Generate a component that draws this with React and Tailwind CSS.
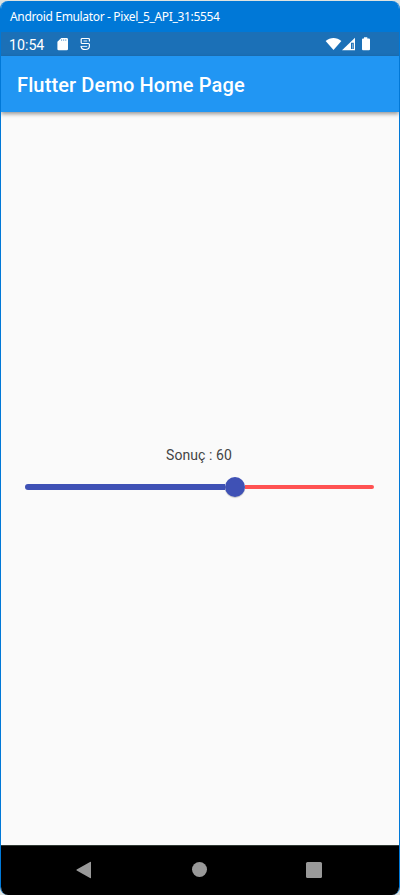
function TitleBar() {
  return (
    <div className="flex h-[31px] shrink-0 items-center whitespace-nowrap bg-[#0078d7] pl-[9px] text-[12px] leading-5 tracking-[-0.34px] text-white">
      <span className="font-['Noto_Sans',sans-serif]">Android Emulator - Pixel_5_API_31:5554</span>
    </div>
  );
}

function StatusBar() {
  return (
    <div className="flex h-6 shrink-0 items-center bg-[#1b70b7] pl-2 text-white">
      <span className="w-[48px] pt-px text-[14.2px] leading-6">10:54</span>
      <svg className="h-6 w-[11px]" viewBox="0 0 11 24" fill="none">
        <path d="M4.3 6H9.6Q11 6 11 7.3V17Q11 18.2 9.7 18.2H1.7Q.4 18.2 .4 17V9.7Z" fill="#fff" />
        <path d="M4.6 7.3v1.6M6.7 7.3v1.6M8.8 7.3v1.6" stroke="#1b70b7" strokeWidth=".6" />
      </svg>
      <svg className="ml-3 h-6 w-[11px]" viewBox="0 0 11 24" fill="none" stroke="#fff" strokeWidth="1.2">
        <path d="M9.4 9.5V7.6Q9.4 6.5 8.3 6.5H2.3Q1.2 6.5 1.2 7.6V10.4Q1.2 11.5 2.3 11.5H8.3Q9.4 11.5 9.4 12.6V14C9.4 16.2 7.7 17.5 5.3 17.5S1.2 16.2 1.2 14.2" />
        <path d="M3.5 9H7.2M.6 14.4H7.2" strokeWidth=".9" />
      </svg>
      <svg className="ml-auto mr-[28px] h-6 w-[46px]" viewBox="0 0 46 24" fill="#fff">
        <path d="M.6 9.1C5.2 4.9 11.8 4.9 16.4 9.1L8.5 18Z" />
        <path d="M17 18.2L30 5.8V18.2Z" />
        <path d="M26 10.8h2.8V17H26Z" fill="#1b70b7" />
        <path d="M27 11.8h.9V16.8H27Z" fill="#8ab5da" />
        <path d="M39 5.3h3.3V6.5H44Q45 6.5 45 7.5V17.2Q45 18.2 44 18.2H38Q37 18.2 37 17.2V7.5Q37 6.5 38 6.5h1Z" />
      </svg>
    </div>
  );
}

function Slider() {
  return (
    <div className="mr-[2px] flex h-5 w-[349px] items-center">
      <div className="h-1.5 w-[200.5px] rounded-l-full bg-[#3f51b5]" />
      <div className="h-5 w-5 shrink-0 rounded-full bg-[#3f51b5] shadow-[0_1px_1px_rgba(0,0,0,0.2)]" />
      <div className="h-1 flex-1 rounded-r-full bg-[#ff5252]" />
    </div>
  );
}

function NavigationBar() {
  return (
    <div className="flex h-[50px] shrink-0 items-center border-t border-[#303a34] bg-black pb-[2px]">
      <svg className="ml-[75px] h-[18px] w-4" viewBox="0 0 16 18" fill="#999">
        <path d="M14 1Q15 .4 15 1.5V16.5Q15 17.6 14 17L.7 9.6Q0 9 .7 8.4Z" />
      </svg>
      <div className="ml-[100px] h-[15px] w-[15px] rounded-full bg-[#999]" />
      <div className="ml-[99px] h-4 w-4 rounded-[1.5px] bg-[#999]" />
    </div>
  );
}

export default function App() {
  return (
    <div className="h-[895px] w-[400px] overflow-hidden bg-[#dfe3e0] pt-px font-[Roboto,sans-serif]">
      <div className="flex h-[894px] flex-col overflow-hidden rounded-lg border-x border-[#0078d7] bg-[#fafafa]">
        <TitleBar />
        <StatusBar />
        <header className="z-10 flex h-14 shrink-0 items-center bg-[#2196f3] pl-4 pt-[2px] shadow-[0_2px_4px_rgba(0,0,0,0.4)]">
          <h1 className="text-[20px] font-medium leading-6 tracking-[0.13px] text-white">Flutter Demo Home Page</h1>
        </header>
        <main className="flex flex-1 flex-col items-center pt-[333px]">
          <p className="mb-[12px] mr-[2px] text-[14px] leading-5 tracking-[0.08px] text-[#444]">Sonuç : 60</p>
          <Slider />
        </main>
        <NavigationBar />
      </div>
    </div>
  );
}
